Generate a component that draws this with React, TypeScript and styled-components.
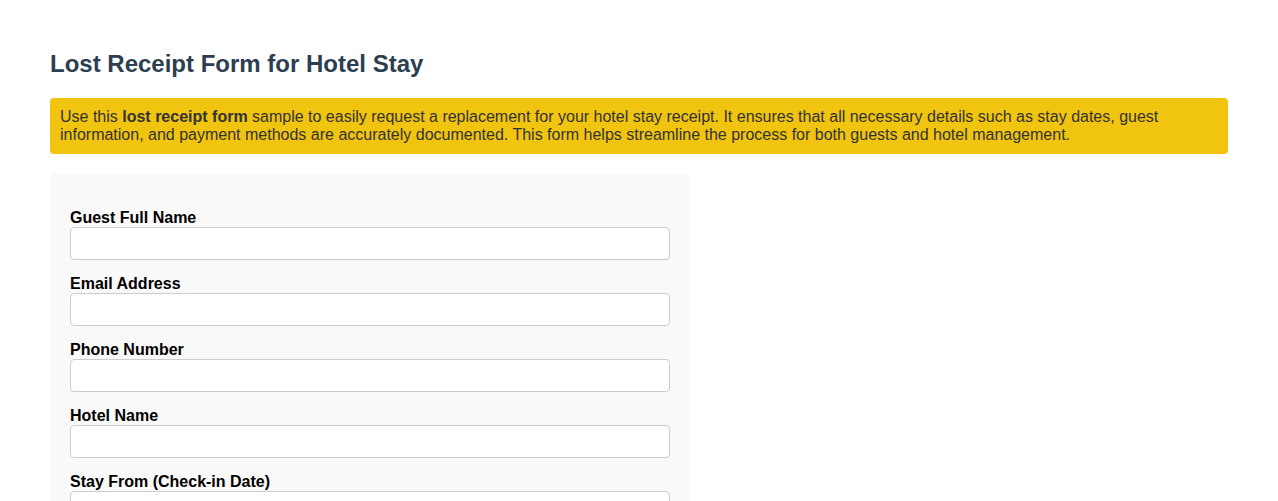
import * as React from 'react';
import styled, { createGlobalStyle } from 'styled-components';

const GlobalStyle = createGlobalStyle`
  html, body {
    margin: 0;
    padding: 0;
    background: #ffffff;
    font-family: "Liberation Sans", Arial, sans-serif;
  }
`;

const Page = styled.div`
  padding: 50px 50px 40px;
`;

const Title = styled.h1`
  margin: 0 0 20px;
  font-size: 24px;
  line-height: 28px;
  font-weight: bold;
  color: #2c3e50;
`;

const Intro = styled.p`
  margin: 0 0 20px;
  padding: 10px;
  background: #f1c40f;
  border-radius: 4px;
  font-size: 16px;
  line-height: 18px;
  color: #333333;
`;

const FormPanel = styled.form`
  width: 640px;
  box-sizing: border-box;
  padding: 20px;
  background: #f9f9f9;
  border-radius: 5px;
`;

const Label = styled.label`
  display: block;
  margin-top: 15px;
  font-size: 16px;
  line-height: 18px;
  font-weight: bold;
  color: #000000;
`;

const Input = styled.input`
  display: block;
  width: 100%;
  height: 33px;
  box-sizing: border-box;
  margin: 0;
  padding: 6px 8px;
  border: 1px solid #cccccc;
  border-radius: 4px;
  background: #ffffff;
  font-family: inherit;
  font-size: 14px;
`;

const fields = [
  { id: 'guest', label: 'Guest Full Name', type: 'text' },
  { id: 'email', label: 'Email Address', type: 'email' },
  { id: 'phone', label: 'Phone Number', type: 'tel' },
  { id: 'hotel', label: 'Hotel Name', type: 'text' },
  { id: 'from', label: 'Stay From (Check-in Date)', type: 'text' },
  { id: 'to', label: 'Stay To (Check-out Date)', type: 'text' },
];

export default function App() {
  return (
    <Page>
      <GlobalStyle />
      <Title>Lost Receipt Form for Hotel Stay</Title>
      <Intro>
        Use this <strong>lost receipt form</strong> sample to easily request a replacement for your hotel stay
        receipt. It ensures that all necessary details such as stay dates, guest information, and payment methods
        are accurately documented. This form helps streamline the process for both guests and hotel management.
      </Intro>
      <FormPanel onSubmit={(e) => e.preventDefault()}>
        {fields.map((f) => (
          <div key={f.id}>
            <Label htmlFor={f.id}>{f.label}</Label>
            <Input id={f.id} type={f.type} />
          </div>
        ))}
      </FormPanel>
    </Page>
  );
}
